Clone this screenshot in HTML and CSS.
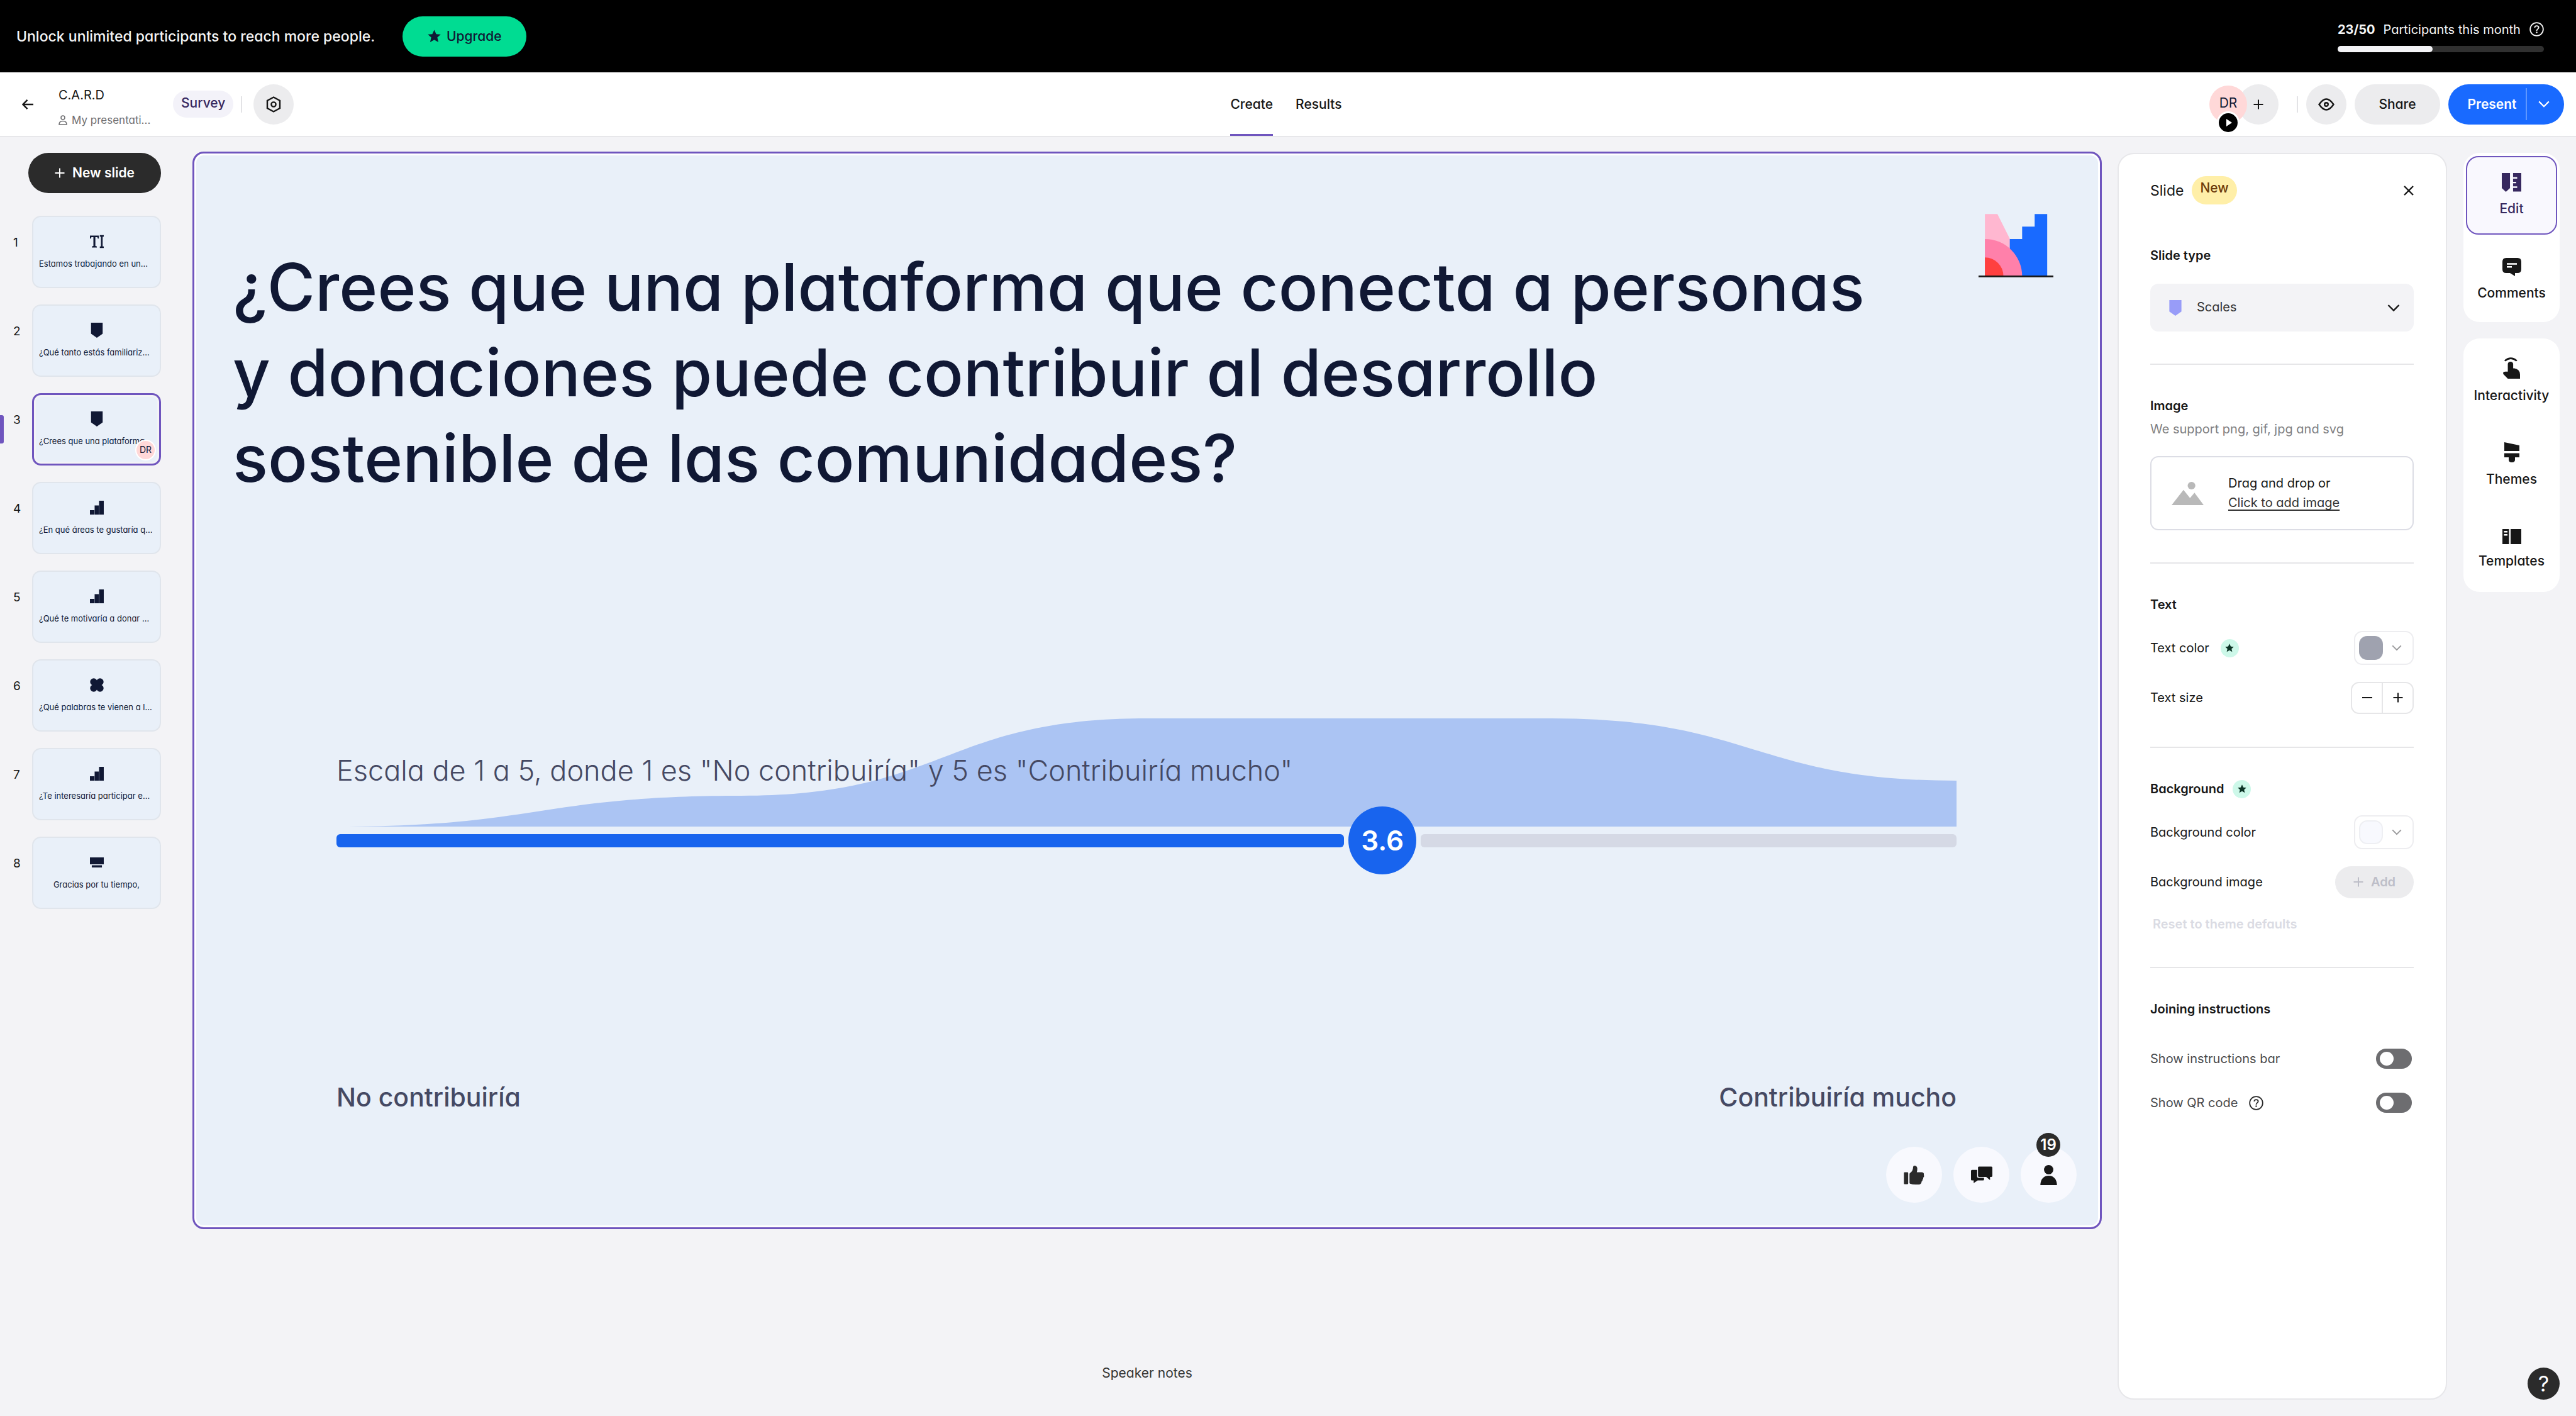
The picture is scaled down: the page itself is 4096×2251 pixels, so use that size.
FILE: index.html
```html
<!DOCTYPE html>
<html lang="en">
<head>
<meta charset="utf-8">
<meta name="viewport" content="width=device-width, initial-scale=1">
<title>C.A.R.D</title>
<link rel="stylesheet" href="styles.css">
</head>
<body>
<svg class="sprite" aria-hidden="true">
  <symbol id="i-star" viewBox="0 0 22 22"><path d="M11 0.500 14.300 7.600 21.700 8.200 16.100 13.200 17.900 21 11 17 4.100 21 5.900 13.200 0.300 8.200 7.700 7.600Z"/></symbol>
  <symbol id="i-plus" viewBox="0 0 16 16"><path d="M8 0.500V15.500M0.500 8H15.500" fill="none" stroke="currentColor" stroke-width="2"/></symbol>
  <symbol id="i-chevron" viewBox="0 0 20 12"><path d="M1.500 1.500 10 10 18.500 1.500" fill="none" stroke="currentColor" stroke-width="2.400"/></symbol>
  <symbol id="i-help" viewBox="0 0 24 24"><g fill="none" stroke="currentColor" stroke-width="1.900"><circle cx="12" cy="12" r="10.800"/><path d="M8.700 9.400C8.700 7.500 10.200 6.300 12 6.300S15.300 7.500 15.300 9.200C15.300 11.600 12 11.700 12 14.500"/></g><circle cx="12" cy="17.300" r="1.300"/></symbol>
  <symbol id="i-scales" viewBox="0 0 20 26"><path d="M0 0H20V19L10 26 0 19Z"/></symbol>
  <symbol id="i-steps" viewBox="0 0 28 28"><path d="M0 19H9V28H0ZM9.500 9.500H18V28H9.500ZM18.500 0H28V28H18.500Z"/></symbol>
  <symbol id="i-cloud" viewBox="0 0 28 28"><circle cx="7.600" cy="7.600" r="7.200"/><circle cx="20.400" cy="7.600" r="7.200"/><circle cx="7.600" cy="20.400" r="7.200"/><circle cx="20.400" cy="20.400" r="7.200"/><path d="M7 7H21V21H7Z"/></symbol>
  <symbol id="i-type" viewBox="0 0 28 26"><path d="M0 1H18V7H16L15 4H11V22L14 23V25H4V23L7 22V4H3L2 7H0ZM20 0H28V3H25.700V23H28V26H20V23H22.300V3H20Z"/></symbol>
  <symbol id="i-ending" viewBox="0 0 30 22"><path d="M0 0H30V15H0ZM4 17H26V22H4Z"/></symbol>
</svg>

<div class="banner">
  <p class="banner-text">Unlock unlimited participants to reach more people.</p>
  <button class="btn upgrade" type="button"><svg class="star"><use href="#i-star"/></svg>Upgrade</button>
  <div class="quota">
    <p class="quota-text"><strong>23/50</strong><span>Participants this month</span><svg class="help"><use href="#i-help"/></svg></p>
    <div class="meter"><div class="meter-fill" style="width:46%"></div></div>
  </div>
</div>

<header class="topbar">
  <div class="top-left">
    <a class="back" href="#" aria-label="Back"><svg viewBox="0 0 18 16" width="18" height="16"><path d="M8.500 0.800 1.500 8 8.500 15.200M1.500 8H18" fill="none" stroke="currentColor" stroke-width="2.400"/></svg></a>
    <div class="doc">
      <div class="doc-name">C.A.R.D</div>
      <a class="doc-folder" href="#"><svg viewBox="0 0 14 16" width="14" height="16"><g fill="none" stroke="currentColor" stroke-width="1.500"><circle cx="7" cy="4" r="3"/><path d="M1 15C1 11.500 3 9.500 7 9.500S13 11.500 13 15Z"/></g></svg>My presentati...</a>
    </div>
    <span class="tag">Survey</span>
    <span class="rule"></span>
    <button class="round" type="button" aria-label="Settings"><svg viewBox="0 0 24 26" width="24" height="26"><g fill="none" stroke="currentColor" stroke-width="2.400"><path d="M12 1.500 22 7V19L12 24.500 2 19V7Z"/><circle cx="12" cy="13" r="3.600"/></g></svg></button>
  </div>
  <nav class="tabs"><a class="tab tab-on" href="#">Create</a><a class="tab" href="#">Results</a></nav>
  <div class="top-right">
    <div class="people">
      <span class="avatar">DR<span class="play"><svg viewBox="0 0 9 12" width="9" height="12"><path d="M0 0 9 6 0 12Z"/></svg></span></span>
      <button class="round add-person" type="button" aria-label="Invite"><svg class="plus"><use href="#i-plus"/></svg></button>
    </div>
    <span class="rule"></span>
    <button class="round" type="button" aria-label="Preview"><svg viewBox="0 0 26 20" width="26" height="20"><g fill="none" stroke="currentColor" stroke-width="2.400"><path d="M1.500 10C6 3.500 9.500 1.500 13 1.500S20 3.500 24.500 10C20 16.500 16.500 18.500 13 18.500S6 16.500 1.500 10Z"/><circle cx="13" cy="10" r="2.800"/></g></svg></button>
    <button class="btn share" type="button">Share</button>
    <div class="present">
      <button class="present-main" type="button">Present</button>
      <button class="present-more" type="button" aria-label="Present options"><svg class="chev"><use href="#i-chevron"/></svg></button>
    </div>
  </div>
</header>

<main class="workspace">
  <aside class="sidebar">
    <button class="btn new-slide" type="button"><svg class="plus"><use href="#i-plus"/></svg>New slide</button>
    <ol class="slides">
      <li class="slide-row"><span class="num">1</span><button class="thumb" type="button"><svg class="thumb-icon"><use href="#i-type"/></svg><span class="thumb-text">Estamos trabajando en un...</span></button></li>
      <li class="slide-row"><span class="num">2</span><button class="thumb" type="button"><svg class="thumb-icon"><use href="#i-scales"/></svg><span class="thumb-text">¿Qué tanto estás familiariz...</span></button></li>
      <li class="slide-row current"><span class="num">3</span><button class="thumb" type="button"><svg class="thumb-icon"><use href="#i-scales"/></svg><span class="thumb-text">¿Crees que una plataforma...</span></button><span class="mini-avatar">DR</span></li>
      <li class="slide-row"><span class="num">4</span><button class="thumb" type="button"><svg class="thumb-icon"><use href="#i-steps"/></svg><span class="thumb-text">¿En qué áreas te gustaría q...</span></button></li>
      <li class="slide-row"><span class="num">5</span><button class="thumb" type="button"><svg class="thumb-icon"><use href="#i-steps"/></svg><span class="thumb-text">¿Qué te motivaría a donar ...</span></button></li>
      <li class="slide-row"><span class="num">6</span><button class="thumb" type="button"><svg class="thumb-icon"><use href="#i-cloud"/></svg><span class="thumb-text">¿Qué palabras te vienen a l...</span></button></li>
      <li class="slide-row"><span class="num">7</span><button class="thumb" type="button"><svg class="thumb-icon"><use href="#i-steps"/></svg><span class="thumb-text">¿Te interesaría participar e...</span></button></li>
      <li class="slide-row"><span class="num">8</span><button class="thumb" type="button"><svg class="thumb-icon"><use href="#i-ending"/></svg><span class="thumb-text thumb-mid">Gracias por tu tiempo,</span></button></li>
    </ol>
  </aside>

  <section class="stage">
    <div class="canvas">
      <div class="slide">
        <div class="slide-head">
          <h1 class="question">¿Crees que una plataforma que conecta a personas<br>y donaciones puede contribuir al desarrollo<br>sostenible de las comunidades?</h1>
          <svg class="logo" viewBox="157 133 448 380"><path fill="#ffb7d0" d="M195 134H270L345 283V420H195Z"/><path fill="#196aff" d="M344 505V283H418V209H493V134H568V505Z"/><path fill="#ff80aa" d="M195 283A223 223 0 0 1 418 505H195Z"/><path fill="#ff4040" d="M195 394A111 111 0 0 1 306 505H195Z"/><path fill="#171717" d="M157 502H605V512H157Z"/></svg>
        </div>
        <div class="scale">
          <div class="plot">
            <svg class="wave" viewBox="0 0 2576 172" preserveAspectRatio="none"><path d="M0 172C322 172 322 123 644 123C966 123 966 0 1288 0H1932C2254 0 2254 99 2576 99V172Z"/></svg>
            <p class="statement">Escala de 1 a 5, donde 1 es "No contribuiría" y 5 es "Contribuiría mucho"</p>
          </div>
          <div class="track"><div class="track-fill" style="width:62.2%"></div><div class="score">3.6</div><div class="track-rest"></div></div>
          <div class="ends"><span>No contribuiría</span><span>Contribuiría mucho</span></div>
        </div>
        <div class="reactions">
          <span class="bubble bubble-like"><svg viewBox="250 403 123 114" width="33" height="30"><path d="M250 448Q250 443 255 443H271Q276 443 276 448V510Q276 515 271 515H255Q250 515 250 510ZM284 455Q284 449 289 446Q305 436 306 410Q307 403 315 403Q331 406 331 421Q331 433 328 443H358Q371 444 371 455Q369 462 373 465Q371 473 366 477Q369 483 362 488Q364 494 357 499Q356 515 342 517H322Q300 517 287 512Q284 511 284 507Z"/></svg></span>
          <span class="bubble"><svg viewBox="650 408 128 100" width="34" height="27"><path d="M697 409H772Q778 409 778 415V465Q778 471 772 471H764V490L741 471H698Q692 471 692 465V415Q692 409 697 409ZM656 429H687V470Q688 476 694 476H728V487Q728 492 722 492H690L666 508V492H656Q650 492 650 486V435Q650 429 656 429Z"/></svg></span>
          <span class="bubble"><svg viewBox="1067 399 100 121" width="27" height="32"><circle cx="1117" cy="427" r="28"/><path d="M1067 520C1068 486 1085 463 1117 463S1166 486 1167 520Z"/></svg><span class="count">19</span></span>
        </div>
      </div>
    </div>
    <p class="notes">Speaker notes</p>
  </section>

  <aside class="panel">
    <div class="panel-head"><h2 class="panel-title">Slide</h2><span class="new">New</span><button class="close" type="button" aria-label="Close"><svg viewBox="0 0 16 16" width="16" height="16"><path d="M1 1 15 15M15 1 1 15" fill="none" stroke="currentColor" stroke-width="2.400"/></svg></button></div>

    <div class="group">
      <label class="group-title" for="slide-type">Slide type</label>
      <div class="picker"><svg class="picker-icon"><use href="#i-scales"/></svg><select class="picker-select" id="slide-type"><option>Scales</option></select><svg class="picker-chev"><use href="#i-chevron"/></svg></div>
    </div>

    <div class="group">
      <h3 class="group-title">Image</h3>
      <p class="hint">We support png, gif, jpg and svg</p>
      <div class="drop"><svg class="drop-icon" viewBox="198 1303 108 92" preserveAspectRatio="none"><path d="M198 1395 238 1335 260 1367 275 1346 306 1395Z"/><ellipse cx="265" cy="1318" rx="13" ry="15"/></svg><p class="drop-text">Drag and drop or<br><a href="#">Click to add image</a></p></div>
    </div>

    <div class="group">
      <h3 class="group-title">Text</h3>
      <div class="field field-first"><span class="field-name">Text color<span class="pro"><svg class="pro-star"><use href="#i-star"/></svg></span></span><button class="swatch" type="button" aria-label="Text color"><span class="chip chip-text"></span><svg class="swatch-chev"><use href="#i-chevron"/></svg></button></div>
      <div class="field"><span class="field-name">Text size</span><span class="stepper"><button class="step" type="button" aria-label="Smaller"><svg viewBox="0 0 16 16" width="16" height="16"><path d="M0 8H16" stroke="currentColor" stroke-width="2"/></svg></button><button class="step" type="button" aria-label="Larger"><svg class="plus"><use href="#i-plus"/></svg></button></span></div>
    </div>

    <div class="group">
      <h3 class="group-title">Background<span class="pro"><svg class="pro-star"><use href="#i-star"/></svg></span></h3>
      <div class="field field-first"><span class="field-name">Background color</span><button class="swatch" type="button" aria-label="Background color"><span class="chip chip-back"></span><svg class="swatch-chev"><use href="#i-chevron"/></svg></button></div>
      <div class="field"><span class="field-name">Background image</span><button class="add" type="button" disabled><svg class="plus"><use href="#i-plus"/></svg>Add</button></div>
      <button class="reset" type="button" disabled>Reset to theme defaults</button>
    </div>

    <div class="group">
      <h3 class="group-title">Joining instructions</h3>
      <div class="toggle-row toggle-first"><label class="toggle-name" for="bar">Show instructions bar</label><input class="toggle" id="bar" type="checkbox"></div>
      <div class="toggle-row"><label class="toggle-name" for="qr">Show QR code<svg class="help"><use href="#i-help"/></svg></label><input class="toggle" id="qr" type="checkbox"></div>
    </div>
  </aside>

  <nav class="rail">
    <div class="rail-card">
      <button class="tool tool-on" type="button"><svg viewBox="0 0 114 110" width="31" height="30"><path d="M0 0H48V88L24 110 0 88ZM66 0H114V108H66V87H90V78H66V60H84V51H66V33H90V24H66Z"/></svg>Edit</button>
      <button class="tool" type="button"><svg viewBox="0 0 30 29" width="30" height="29"><path d="M6 0H24Q30 0 30 6V18Q30 24 24 24H20V29L12 24H6Q0 24 0 18V6Q0 0 6 0Z"/><path d="M7 9.500H23M7 14.200H15" stroke="#fff" stroke-width="2.600"/></svg>Comments</button>
    </div>
    <div class="rail-card">
      <button class="tool" type="button"><svg viewBox="1324 814 57 84" width="27" height="34" preserveAspectRatio="none"><path d="M1340 840Q1341 831 1349 831T1358 840V857H1362Q1381 861 1381 882V898H1340L1325 880Q1322 870 1332 870H1340Z"/><path d="M1330 828Q1350 808 1370 828" fill="none" stroke="#171717" stroke-width="6"/></svg>Interactivity</button>
      <button class="tool" type="button"><svg viewBox="0 0 24 32" width="24" height="32"><path d="M0 0 24 5V14H0ZM0 17.500H24V24H17V28Q17 32 12 32T7 28V24H0Z"/></svg>Themes</button>
      <button class="tool" type="button"><svg viewBox="0 0 30 24" width="30" height="24"><path d="M0 0H10.500V24H0ZM13 0H30V24H13Z"/><path d="M2.500 4.300H8M2.500 9.300H8" stroke="#fff" stroke-width="2.600"/></svg>Templates</button>
    </div>
    <button class="faq" type="button" aria-label="Help">?</button>
  </nav>
</main>
</body>
</html>
```
FILE: styles.css
```css
* { box-sizing: border-box; }
body {
  margin: 0;
  min-height: 100vh;
  display: flex;
  flex-direction: column;
  background: #f3f3f6;
  color: #171717;
  font-family: Inter, "Liberation Sans", sans-serif;
  font-feature-settings: "cv11";
  font-size: 21px;
  line-height: 28px;
}
p, h1, h2, h3, ol { margin: 0; padding: 0; font-weight: 400; }
button { margin: 0; padding: 0; border: 0; background: none; color: inherit; font: inherit; font-feature-settings: inherit; }
a { color: inherit; text-decoration: none; }
svg { display: block; flex: none; fill: currentColor; }
.sprite { position: absolute; width: 0; height: 0; }
.plus { width: 16px; height: 16px; }
.help { width: 23px; height: 23px; }
.btn { display: flex; align-items: center; justify-content: center; height: 64px; border-radius: 32px; font-weight: 500; }

.banner { display: flex; align-items: center; height: 115px; padding: 0 51px 0 26px; background: #000; color: #f5f5f5; }
.banner-text { font-size: 23px; font-weight: 500; }
.upgrade { width: 197px; gap: 9px; margin-left: 44px; background: #00dc92; color: #101834; }
.star { width: 21px; height: 21px; }
.quota { width: 328px; margin-left: auto; }
.quota-text { display: flex; align-items: center; margin-bottom: 12px; font-size: 20px; white-space: nowrap; }
.quota-text strong { margin-right: 13px; font-weight: 700; }
.quota-text .help { margin-left: auto; }
.meter { height: 10px; border-radius: 5px; background: #303030; }
.meter-fill { height: 10px; border-radius: 5px; background: #f3f3f6; }

.topbar { display: grid; grid-template-columns: 1fr auto 1fr; align-items: center; height: 103px; border-bottom: 2px solid #e7e7ea; background: #fff; }
.top-left { display: flex; align-items: center; padding-left: 35px; }
.back { width: 58px; }
.doc { width: 182px; padding-top: 10px; }
.doc-name { padding-bottom: 12px; font-size: 20px; }
.doc-folder { display: flex; align-items: center; gap: 7px; color: #6f6f72; font-size: 17px; }
.tag { height: 43px; padding: 0 13px; border-radius: 22px; background: #f3f2f9; color: #37285f; font-weight: 500; line-height: 40px; }
.rule { width: 2px; height: 26px; margin: 0 18px 0 12px; background: #e3e3e6; }
.round { display: flex; align-items: center; justify-content: center; width: 64px; height: 64px; border-radius: 50%; background: #ececee; }
.tabs { display: flex; align-self: stretch; gap: 36px; margin-right: 6px; }
.tab { display: flex; align-items: center; border-bottom: 3px solid transparent; border-top: 3px solid transparent; font-weight: 500; }
.tab-on { border-bottom-color: #6f55be; }
.top-right { display: flex; align-items: center; justify-content: flex-end; gap: 13px; padding-right: 19px; }
.people { display: flex; align-items: center; margin-right: 4px; }
.avatar { position: relative; display: flex; align-items: center; justify-content: center; width: 60px; height: 60px; padding-bottom: 4px; border-radius: 50%; background: #ffd8d8; color: #101834; }
.play { position: absolute; left: 12px; top: 41px; z-index: 2; display: flex; align-items: center; justify-content: center; width: 36px; height: 36px; padding-left: 3px; border: 3px solid #fff; border-radius: 50%; background: #000; color: #fff; }
.add-person { margin-left: -14px; }
.top-right .rule { margin: 0 0 0 12px; }
.share { width: 136px; background: #ececee; }
.present { display: flex; align-items: center; height: 64px; border-radius: 32px; background: #196aff; color: #fff; font-weight: 600; }
.present-main { width: 125px; height: 51px; padding-left: 16px; border-right: 2px solid #5e97ff; }
.present-more { display: flex; align-items: center; justify-content: center; width: 59px; height: 64px; padding-right: 5px; }
.chev { width: 20px; height: 11px; }

.workspace { flex: 1; display: grid; grid-template-columns: 306px 1fr 524px 179px; padding: 23px 26px 26px 0; }
.sidebar { padding: 2px 50px 0 21px; }
.new-slide { width: 211px; gap: 12px; margin-left: 24px; background: #2b2b2b; color: #fff; font-weight: 600; }
.slides { display: flex; flex-direction: column; gap: 26px; margin-top: 36px; list-style: none; }
.slide-row { position: relative; display: flex; align-items: center; }
.num { width: 30px; padding-bottom: 30px; font-size: 19px; }
.thumb { display: flex; flex-direction: column; align-items: center; flex: 1; height: 115px; min-width: 0; padding: 27px 9px 0; border: 2px solid #e0e5ec; border-radius: 14px; background: #e9f0f9; color: #101834; }
.thumb-icon { width: 22px; height: 24px; }
.thumb-text { align-self: flex-start; padding-top: 13px; font-size: 13px; line-height: 20px; white-space: nowrap; }
.thumb-mid { align-self: center; }
.current::before { content: ""; position: absolute; left: -21px; top: 35px; width: 6px; height: 45px; border-radius: 0 3px 3px 0; background: #6f55be; }
.current .thumb { padding: 26px 8px 0; border: 3px solid #6f55be; box-shadow: inset 0 0 0 3px #f3f3f6; }
.mini-avatar { position: absolute; right: 8px; bottom: 8px; width: 33px; height: 33px; border: 2px solid #fff; border-radius: 50%; background: #ffd8d8; color: #101834; font-size: 14px; line-height: 28px; text-align: center; }

.stage { display: flex; flex-direction: column; min-width: 0; }
.canvas { margin-right: 25px; padding: 3px; border: 3px solid #6f55be; border-radius: 18px; background: #fff; }
.slide { display: flex; flex-direction: column; aspect-ratio: 16 / 9; border-radius: 12px; background: #e9f0f9; color: #101834; }
.slide-head { display: flex; justify-content: space-between; padding: 93px 71px 0 58px; }
.question { padding: 48px 0 3px; font-size: 104px; font-weight: 500; line-height: 136px; white-space: nowrap; }
.logo { width: 119px; height: 101px; }
.scale { padding: 343px 225px 0 223px; color: #454963; }
.plot { display: grid; }
.wave { grid-area: 1 / 1; width: 100%; height: 172px; color: #abc4f3; }
.statement { grid-area: 1 / 1; z-index: 1; padding-top: 53px; font-size: 45px; font-weight: 300; line-height: 60px; white-space: nowrap; }
.track { position: relative; display: flex; align-items: center; gap: 7px; margin-top: -32px; }
.track-fill { height: 21px; border-radius: 6px; background: #1864ee; }
.track-rest { flex: 1; height: 21px; border-radius: 6px; background: #d5d9e5; }
.score { width: 108px; height: 108px; border-radius: 50%; background: #1864ee; color: #fff; font-size: 44px; font-weight: 600; line-height: 108px; text-align: center; }
.ends { display: flex; justify-content: space-between; padding-top: 326px; font-size: 41px; font-weight: 500; line-height: 56px; }
.reactions { display: flex; justify-content: flex-end; gap: 18px; margin-top: auto; padding: 0 34px 36px 0; color: #171717; }
.bubble { position: relative; display: flex; align-items: center; justify-content: center; width: 89px; height: 89px; border-radius: 50%; background: #f8f9fe; }
.bubble-like { color: #2b2b2b; }
.count { position: absolute; left: 25px; top: -22px; width: 38px; height: 38px; border-radius: 50%; background: #2b2b2b; color: #fff; font-size: 24px; font-weight: 600; line-height: 38px; text-align: center; }
.notes { margin-top: auto; padding: 0 25px 28px 0; color: #333; text-align: center; }

.panel { margin-top: 2px; padding: 35px 51px 0 50px; border: 2px solid #e7e7ea; border-radius: 26px; background: #fff; font-size: 20px; }
.panel-head { display: flex; align-items: center; height: 45px; }
.panel-title { font-size: 23px; }
.new { height: 45px; margin-left: 13px; padding: 0 13px; border-radius: 23px; background: #ffefa8; color: #6b3a0b; font-size: 21px; font-weight: 500; line-height: 38px; }
.close { margin-left: auto; }
.group { padding: 51px 0; border-bottom: 2px solid #e6e6e8; }
.group:nth-of-type(2) { padding-top: 67px; }
.group:last-child { border-bottom: 0; }
.group-title { display: flex; align-items: center; gap: 14px; height: 28px; font-size: 20px; font-weight: 600; }
.picker { display: flex; align-items: center; height: 76px; margin-top: 31px; padding: 0 22px 0 30px; border-radius: 13px; background: #f3f3f6; }
.picker-icon { width: 20px; height: 25px; color: #989cf8; }
.picker-select { flex: 1; height: 76px; margin: 0; padding: 0 0 2px 24px; border: 0; background: none; appearance: none; color: #333; font: inherit; font-feature-settings: inherit; }
.picker-chev { width: 20px; height: 13px; }
.hint { margin-top: 9px; color: #7f7f82; }
.drop { display: flex; align-items: center; gap: 39px; height: 118px; margin-top: 29px; padding-left: 32px; border: 2px solid #dcdde5; border-radius: 13px; }
.drop-icon { width: 51px; height: 37px; color: #b9b9b9; }
.drop-text { line-height: 31px; }
.drop-text a { text-decoration: underline; text-underline-offset: 4px; color: #333; }
.field { display: flex; align-items: center; justify-content: space-between; height: 54px; margin-top: 25px; }
.field-first { margin-top: 28px; }
.field-name { display: flex; align-items: center; gap: 18px; }
.pro { display: flex; align-items: center; justify-content: center; width: 29px; height: 29px; border-radius: 50%; background: #cdf8e9; color: #0b3325; }
.pro-star { width: 14px; height: 14px; }
.swatch { display: flex; align-items: center; width: 95px; height: 54px; padding-left: 6px; border: 2px solid #ededf0; border-radius: 13px; color: #9a9a9c; }
.chip { width: 38px; height: 38px; border-radius: 13px; }
.chip-text { background: #9fa2af; }
.chip-back { border: 2px solid #eeeff3; background: #f8f9fe; }
.swatch-chev { width: 16px; height: 10px; margin-left: 14px; }
.stepper { display: flex; width: 100px; height: 51px; border: 2px solid #e6e6e8; border-radius: 13px; }
.step { display: flex; align-items: center; justify-content: center; flex: 1; }
.step + .step { border-left: 2px solid #e6e6e8; }
.add { display: flex; align-items: center; justify-content: center; gap: 12px; width: 125px; height: 51px; border-radius: 26px; background: #ececee; color: #bdbec8; font-weight: 600; }
.reset { display: block; margin: 26px 0 3px 4px; color: #dadbe3; font-weight: 600; }
.toggle-row { display: flex; align-items: center; justify-content: space-between; height: 32px; margin-top: 38px; padding-right: 3px; }
.toggle-first { margin-top: 49px; }
.toggle-name { display: flex; align-items: center; gap: 18px; color: #4a4a4c; }
.toggle-name .help { color: #2b2b2b; }
.toggle { width: 57px; height: 32px; margin: 0; padding: 5px 6px; border-radius: 16px; background: #6d6d70; appearance: none; }
.toggle::before { content: ""; display: block; width: 22px; height: 22px; border-radius: 50%; background: #fff; }

.rail { display: flex; flex-direction: column; gap: 26px; margin: 2px 0 0 26px; }
.rail-card { display: flex; flex-direction: column; gap: 9px; padding: 5px 4px; border-radius: 26px; background: #fff; }
.tool { display: flex; flex-direction: column; align-items: center; justify-content: center; gap: 13px; height: 125px; border-radius: 20px; font-weight: 500; }
.tool-on { border: 2px solid #6f55be; background: #f9f8fe; color: #37285f; }
.faq { align-self: flex-end; width: 51px; height: 51px; margin-top: auto; border-radius: 50%; background: #2b2b2b; color: #fff; font-size: 34px; line-height: 51px; }
```
